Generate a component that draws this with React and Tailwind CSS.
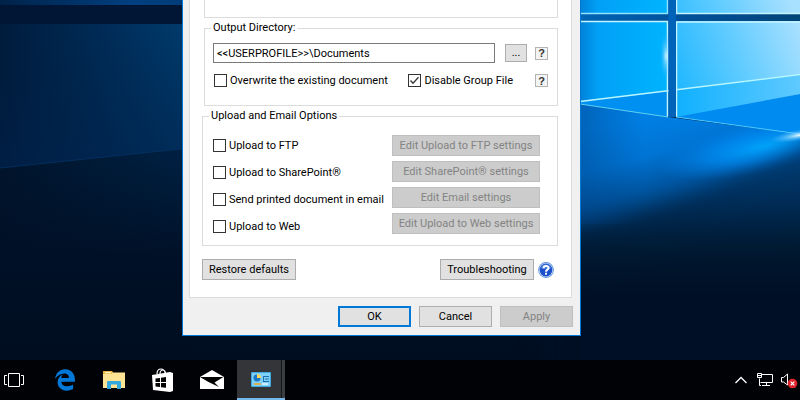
import { FaEdgeLegacy } from "react-icons/fa";

function Wallpaper() {
  return (
    <svg className="absolute inset-0 h-full w-full" viewBox="0 0 800 360" preserveAspectRatio="xMidYMid slice" aria-hidden="true">
      <defs>
        <linearGradient id="base" x1="0" y1="0" x2="0" y2="1">
          <stop offset="0" stopColor="#002a57" />
          <stop offset="0.45" stopColor="#001733" />
          <stop offset="1" stopColor="#000d20" />
        </linearGradient>
        <linearGradient id="leftUpper" x1="0" y1="0" x2="1" y2="0">
          <stop offset="0" stopColor="#001c3c" />
          <stop offset="0.5" stopColor="#002a55" />
          <stop offset="1" stopColor="#003c6e" />
        </linearGradient>
        <linearGradient id="leftTop" x1="0" y1="0" x2="1" y2="0">
          <stop offset="0" stopColor="#002249" />
          <stop offset="0.7" stopColor="#004080" />
          <stop offset="1" stopColor="#003c78" />
        </linearGradient>
        <linearGradient id="fadeDown" x1="0" y1="0" x2="0" y2="1">
          <stop offset="0" stopColor="#001c3c" stopOpacity="0" />
          <stop offset="1" stopColor="#00204a" stopOpacity="0.6" />
        </linearGradient>
        <linearGradient id="leftLower" x1="0" y1="0" x2="1" y2="0">
          <stop offset="0" stopColor="#00142b" />
          <stop offset="1" stopColor="#002042" />
        </linearGradient>
        <linearGradient id="lowerFade" x1="0" y1="0" x2="0" y2="1">
          <stop offset="0" stopColor="#001026" stopOpacity="0" />
          <stop offset="0.5" stopColor="#001026" />
          <stop offset="1" stopColor="#000d20" />
        </linearGradient>
        <linearGradient id="paneLeft" x1="0" y1="0" x2="1" y2="0">
          <stop offset="0" stopColor="#0081d8" />
          <stop offset="0.2" stopColor="#00a0f6" />
          <stop offset="1" stopColor="#00b4ff" />
        </linearGradient>
        <linearGradient id="paneRight" x1="0" y1="0.6" x2="1" y2="0.2">
          <stop offset="0" stopColor="#22b8ff" />
          <stop offset="0.5" stopColor="#62ccff" />
          <stop offset="1" stopColor="#a8e0ff" />
        </linearGradient>
        <linearGradient id="beam" x1="0" y1="0" x2="1" y2="0">
          <stop offset="0" stopColor="#10b0ff" />
          <stop offset="1" stopColor="#5fcaff" />
        </linearGradient>
        <linearGradient id="floor" gradientUnits="userSpaceOnUse" x1="660" y1="110" x2="700" y2="270">
          <stop offset="0" stopColor="#0080e6" />
          <stop offset="0.25" stopColor="#0074d4" />
          <stop offset="0.45" stopColor="#0055a0" />
          <stop offset="0.62" stopColor="#003566" />
          <stop offset="0.8" stopColor="#001d40" />
          <stop offset="1" stopColor="#000f25" />
        </linearGradient>
        <linearGradient id="shadow" gradientUnits="userSpaceOnUse" x1="0" y1="140" x2="0" y2="300">
          <stop offset="0" stopColor="#00427e" />
          <stop offset="0.35" stopColor="#002f5c" />
          <stop offset="0.7" stopColor="#00182f" />
          <stop offset="1" stopColor="#000f25" />
        </linearGradient>
        <linearGradient id="floorShade" x1="0" y1="0" x2="1" y2="0">
          <stop offset="0" stopColor="#003a78" stopOpacity="0.4" />
          <stop offset="0.4" stopColor="#003a78" stopOpacity="0" />
        </linearGradient>
        <linearGradient id="bar" x1="0" y1="0" x2="1" y2="0">
          <stop offset="0" stopColor="#0064b4" />
          <stop offset="0.45" stopColor="#00519c" />
          <stop offset="1" stopColor="#004478" />
        </linearGradient>
        <radialGradient id="glow">
          <stop offset="0" stopColor="#00a8ff" stopOpacity="0.95" />
          <stop offset="0.5" stopColor="#0094ff" stopOpacity="0.6" />
          <stop offset="1" stopColor="#0080ea" stopOpacity="0" />
        </radialGradient>
        <radialGradient id="flare">
          <stop offset="0" stopColor="#ffffff" />
          <stop offset="0.3" stopColor="#a5e4ff" stopOpacity="0.7" />
          <stop offset="1" stopColor="#30b0ff" stopOpacity="0" />
        </radialGradient>
        <filter id="soft" x="-20%" y="-20%" width="140%" height="140%" colorInterpolationFilters="sRGB">
          <feGaussianBlur stdDeviation="10" />
        </filter>
      </defs>
      <rect width="800" height="360" fill="url(#base)" />
      <rect width="190" height="5" fill="url(#leftTop)" />
      <rect y="5" width="190" height="19" fill="#001634" />
      <path d="M0 24H190V148L0 168Z" fill="url(#leftUpper)" />
      <path d="M0 24H190V148L0 168Z" fill="url(#fadeDown)" />
      <path d="M0 168L190 148V360H0Z" fill="url(#leftLower)" />
      <rect y="160" width="190" height="200" fill="url(#lowerFade)" />
      <path d="M0 168L190 148" stroke="#05366a" strokeWidth="1" opacity="0.7" />

      <path d="M580 100L668 117L800 134V360H580Z" fill="url(#floor)" />
      <ellipse cx="765" cy="146" rx="110" ry="26" fill="url(#glow)" transform="rotate(-12 765 146)" />
      <path d="M840 128L770 166L700 196L640 216L540 234V420H880V128Z" fill="url(#shadow)" filter="url(#soft)" opacity="0.92" />
      <rect x="580" y="104" width="160" height="120" fill="url(#floorShade)" />
      <path d="M580 0H668V117L580 103Z" fill="url(#paneLeft)" />
      <path d="M580 102L668 91V117L580 104Z" fill="#0090f2" />
      <path d="M676 0H800V134L676 117Z" fill="url(#paneRight)" />
      <path d="M676 89L800 74V94L676 117Z" fill="url(#beam)" />
      <path d="M676 117L800 94V134Z" fill="#008bf0" />
      <path d="M668 0H676V117L668 116Z" fill="#0063ba" />
      <rect x="580" y="14" width="220" height="7" fill="url(#bar)" />
      <g fill="none" stroke="#c4f5ff" strokeWidth="1.5">
        <path d="M580 13.5H667.500V0" stroke="#8fe4ff" />
        <path d="M580 21.500H667.500V117" />
        <path d="M800 13.500H676.500V0" />
        <path d="M800 22H676.500V117" />
        <path d="M580 101.500L800 74.500" stroke="#b8f6ff" />
        <path d="M580 104L668 117" stroke="#5fd0f0" strokeWidth="1" />
        <path d="M676 117L800 134" stroke="#4cc8ff" strokeWidth="1" />
      </g>
      <ellipse cx="666" cy="56" rx="6" ry="24" fill="url(#flare)" opacity="0.8" />
      <rect x="668.500" y="0" width="7.500" height="117" fill="#0063ba" />
      <ellipse cx="800" cy="135" rx="32" ry="6" fill="url(#flare)" transform="rotate(-10 800 135)" />
    </svg>
  );
}

const buttonBase = "flex h-[21px] items-center justify-center border whitespace-nowrap";
const buttonNormal = "border-[#adadad] bg-[#e1e1e1] text-black";
const buttonDisabled = "border-[#bfbfbf] bg-[#cccccc] text-[#838383]";

function Button({ children, className = "", disabled = false }) {
  return (
    <button type="button" disabled={disabled} className={`${buttonBase} ${disabled ? buttonDisabled : buttonNormal} ${className}`}>
      {children}
    </button>
  );
}

function CheckBox({ id, label, checked = false }) {
  return (
    <div className="flex h-[21px] items-center gap-[3px]">
      <span className="grid size-[13px] shrink-0">
        <input
          id={id}
          type="checkbox"
          defaultChecked={checked}
          className="peer col-start-1 row-start-1 size-[13px] appearance-none border border-[#333333] bg-white"
        />
        <svg viewBox="0 0 13 13" className="pointer-events-none invisible col-start-1 row-start-1 size-[13px] peer-checked:visible" aria-hidden="true">
          <path d="M2.500 6.500L5 9.200L10.500 3.300" fill="none" stroke="#333" strokeWidth="1.300" />
        </svg>
      </span>
      <label htmlFor={id} className="whitespace-nowrap">{label}</label>
    </div>
  );
}

function HintButton({ label }) {
  return (
    <button
      type="button"
      aria-label={label}
      className="flex size-[13px] shrink-0 items-center justify-center border border-[#b4b4b4] bg-[#f4f4f4] font-['Liberation_Sans',sans-serif] font-bold text-[#333333]"
    >
      ?
    </button>
  );
}

function GroupBox({ title, className = "", children }) {
  return (
    <fieldset className={`min-w-0 border border-[#dcdcdc] pl-[6px] ${className}`}>
      <legend className="px-[2px] leading-[14px]">{title}</legend>
      {children}
    </fieldset>
  );
}

const uploads = [
  { id: "ftp", label: "Upload to FTP" },
  { id: "sharepoint", label: "Upload to SharePoint®" },
  { id: "email", label: "Send printed document in email" },
  { id: "web", label: "Upload to Web" },
];

const uploadSettings = [
  "Edit Upload to FTP settings",
  "Edit SharePoint® settings",
  "Edit Email settings",
  "Edit Upload to Web settings",
];

function HelpIcon() {
  return (
    <svg viewBox="0 0 16 16" className="size-4" aria-hidden="true">
      <circle cx="8" cy="8" r="7.900" fill="#5b90dc" />
      <circle cx="8" cy="8" r="7.100" fill="#d5e5fa" />
      <circle cx="8" cy="8" r="6.400" fill="#1c50c8" />
      <path d="M2.700 6.500a5.400 5.400 0 0 1 10.600 0q-5 1.500-10.600 0" fill="#4f86e6" opacity="0.7" />
      <path d="M5.500 6.300C5.500 3.200 10.600 3.300 10.600 6C10.600 7.700 8 7.600 8 9.700" fill="none" stroke="#fff" strokeWidth="2" />
      <rect x="7" y="10.700" width="2" height="2" fill="#fff" />
    </svg>
  );
}

function PrinterDialog() {
  return (
    <section className="relative ml-[182px] w-[399px] self-start border border-t-0 border-[#0078d7] bg-[#f0f0f0] px-[6px] pb-2">
      <div className="mr-[2px] border border-t-0 border-[#dcdcdc] bg-white pr-[13px] pb-[17px] pl-3">
        <div className="ml-[2px] h-[18px] border border-t-0 border-[#dcdcdc]" />
        <GroupBox title="Output Directory:" className="mt-[3px] ml-[2px] h-[85px] pr-[9px]">
          <div className="mt-2 flex h-5 items-center pl-[2px]">
            <input
              type="text"
              aria-label="Output Directory"
              defaultValue="<<USERPROFILE>>\Documents"
              className="h-5 min-w-0 flex-1 border border-[#7a7a7a] bg-white px-[3px]"
            />
            <button type="button" aria-label="Browse" className="mr-2 ml-[10px] flex h-[18px] w-[22px] items-center justify-center border border-[#adadad] bg-[#e1e1e1]">
              ...
            </button>
            <HintButton label="Help on output directory" />
          </div>
          <div className="mt-[7px] flex items-center pl-[3px]">
            <CheckBox id="overwrite" label="Overwrite the existing document" />
            <div className="ml-auto">
              <CheckBox id="group" label="Disable Group File" checked />
            </div>
            <div className="ml-[22px]">
              <HintButton label="Help on group file" />
            </div>
          </div>
        </GroupBox>
        <GroupBox title="Upload and Email Options" className="mt-[3px] h-[137px] pr-[17px]">
          <div className="flex justify-between pt-3 pl-1">
            <div className="flex flex-col gap-[6px]">
              {uploads.map((item) => (
                <CheckBox key={item.id} id={item.id} label={item.label} />
              ))}
            </div>
            <div className="flex w-[148px] flex-col gap-[5px]">
              {uploadSettings.map((text) => (
                <Button key={text} disabled>{text}</Button>
              ))}
            </div>
          </div>
        </GroupBox>
        <div className="mt-[13px] flex items-center justify-between">
          <Button className="w-[94px]">Restore defaults</Button>
          <div className="flex items-center gap-1 pr-1">
            <Button className="w-[94px]">Troubleshooting</Button>
            <button type="button" aria-label="Help"><HelpIcon /></button>
          </div>
        </div>
      </div>
      <div className="mt-2 mr-px flex justify-end gap-2">
        <button type="button" className="flex h-[21px] w-[73px] items-center justify-center border-2 border-[#0078d7] bg-[#e1e1e1]">OK</button>
        <Button className="w-[73px]">Cancel</Button>
        <Button className="w-[73px]" disabled>Apply</Button>
      </div>
    </section>
  );
}

function TaskViewIcon() {
  return (
    <svg viewBox="0 0 20 16" className="h-4 w-5" fill="none" stroke="#fff" aria-hidden="true">
      <path d="M4.500 1.500H15.500V14.500H4.500ZM3 3.500H.5V12.500H3M17 3.500H19.500V12.500H17" />
    </svg>
  );
}

function FolderIcon() {
  return (
    <svg viewBox="0 0 22 18" className="h-[18px] w-[22px]" aria-hidden="true">
      <path d="M0 0H9L10.500 2H21V17H0Z" fill="#e9b93c" />
      <path d="M2 1H8V2.300H2Z" fill="#fff5c8" />
      <path d="M0 3H8L10 1.500H22V17H0Z" fill="#fde495" />
      <path d="M4 18V11Q4 10 5 10H17Q18 10 18 11V18H14V13.500H8V18Z" fill="#35a9de" />
    </svg>
  );
}

function StoreIcon() {
  return (
    <svg viewBox="0 0 21 24" className="h-6 w-[21px]" aria-hidden="true">
      <path d="M5 6Q5 1 9 1Q12 1 13 4.500M8 6Q8 2 11 2Q13 2 13.500 5" fill="none" stroke="#fff" strokeWidth="1.200" />
      <path d="M0 7L18 4L21 5V23L18 24L1 22Z" fill="#fff" />
      <path d="M3.500 10.500L8 10V14H3.500ZM9 9.800L14 9V14H9ZM3.500 15H8V19L3.500 18.500ZM9 15H14V19.800L9 19.200Z" fill="#000" />
    </svg>
  );
}

function MailIcon() {
  return (
    <svg viewBox="0 0 24 20" className="h-5 w-6" aria-hidden="true">
      <path d="M0 7L12 0L24 7V19H0Z" fill="#fff" />
      <path d="M0 7H23.500L14.500 12.500L19 17L8.500 12Z" fill="#000" />
    </svg>
  );
}

function PanelIcon() {
  return (
    <svg viewBox="0 0 20 15" className="h-[15px] w-5" aria-hidden="true">
      <rect width="20" height="15" rx="1" fill="#3fa9e0" />
      <rect x="1" y="1" width="18" height="13" fill="#7fd0f8" />
      <circle cx="6" cy="6" r="3.500" fill="#1b78c4" />
      <path d="M6 6V2A4 4 0 0 1 10 6Z" fill="#ffd75a" />
      <path d="M12 4.500H18M14 7H18M12 9.500H18M12.500 4V9" stroke="#1d6fb0" />
      <path d="M3 12H10" stroke="#f5a623" strokeWidth="1.500" />
      <path d="M11 12H17" stroke="#e8f8ff" strokeWidth="1.500" />
    </svg>
  );
}

function Taskbar() {
  return (
    <nav className="relative flex h-10 shrink-0 items-stretch justify-between bg-[#010205]">
      <div className="flex items-stretch">
        <button type="button" aria-label="Task View" className="flex w-10 items-center pl-1"><TaskViewIcon /></button>
        <button type="button" aria-label="Edge" className="flex w-[49px] items-center justify-center text-[#0078d7]"><FaEdgeLegacy size={22} /></button>
        <button type="button" aria-label="File Explorer" className="flex w-[49px] items-center justify-center"><FolderIcon /></button>
        <button type="button" aria-label="Store" className="flex w-[49px] items-center justify-center"><StoreIcon /></button>
        <button type="button" aria-label="Mail" className="flex w-[50px] items-center justify-center"><MailIcon /></button>
        <button type="button" aria-label="Printer preferences" className="flex w-12 border-b-2 border-[#76b9ed] bg-[#333538]">
          <span className="flex h-full flex-1 items-center justify-center pl-1"><PanelIcon /></span>
          <span className="h-full w-1 border-l border-[#15171a] bg-[#3b3e41]" />
        </button>
      </div>
      <div className="flex items-center">
        <button type="button" aria-label="Show hidden icons" className="mr-[9px]">
          <svg viewBox="0 0 14 8" className="h-2 w-[14px]" fill="none" stroke="#fff" strokeWidth="1.300" aria-hidden="true"><path d="M1.500 7L7 1.500L12.500 7" /></svg>
        </button>
        <button type="button" aria-label="Network" className="mr-2">
          <svg viewBox="0 0 16 14" className="h-[14px] w-4" fill="none" stroke="#fff" aria-hidden="true">
            <path d="M5 1.500H15.500V9.500H3.500M9.500 9.500V12.500M5 12.500H13M2.500 5.500V12.500H4M.5.5H4.500V4.500H.5ZM1 2.500H4" />
          </svg>
        </button>
        <button type="button" aria-label="Volume muted" className="mr-[2px]">
          <svg viewBox="0 0 17 16" className="h-4 w-[17px]" fill="none" stroke="#fff" aria-hidden="true">
            <path d="M.5 5.500H2.500L6.500 2V13L2.500 10H.5Z" />
            <circle cx="11.500" cy="11.500" r="4.800" fill="#e0242c" stroke="none" />
            <path d="M9.700 9.700L13.300 13.300M13.300 9.700L9.700 13.300" strokeWidth="1.200" />
          </svg>
        </button>
      </div>
    </nav>
  );
}

export default function App() {
  return (
    <div className="flex min-h-screen flex-col bg-[#000d20] font-[Roboto,'Liberation_Sans',sans-serif] text-[11px] leading-[14px] text-black">
      <main className="relative flex flex-1 overflow-hidden">
        <Wallpaper />
        <PrinterDialog />
      </main>
      <Taskbar />
    </div>
  );
}
